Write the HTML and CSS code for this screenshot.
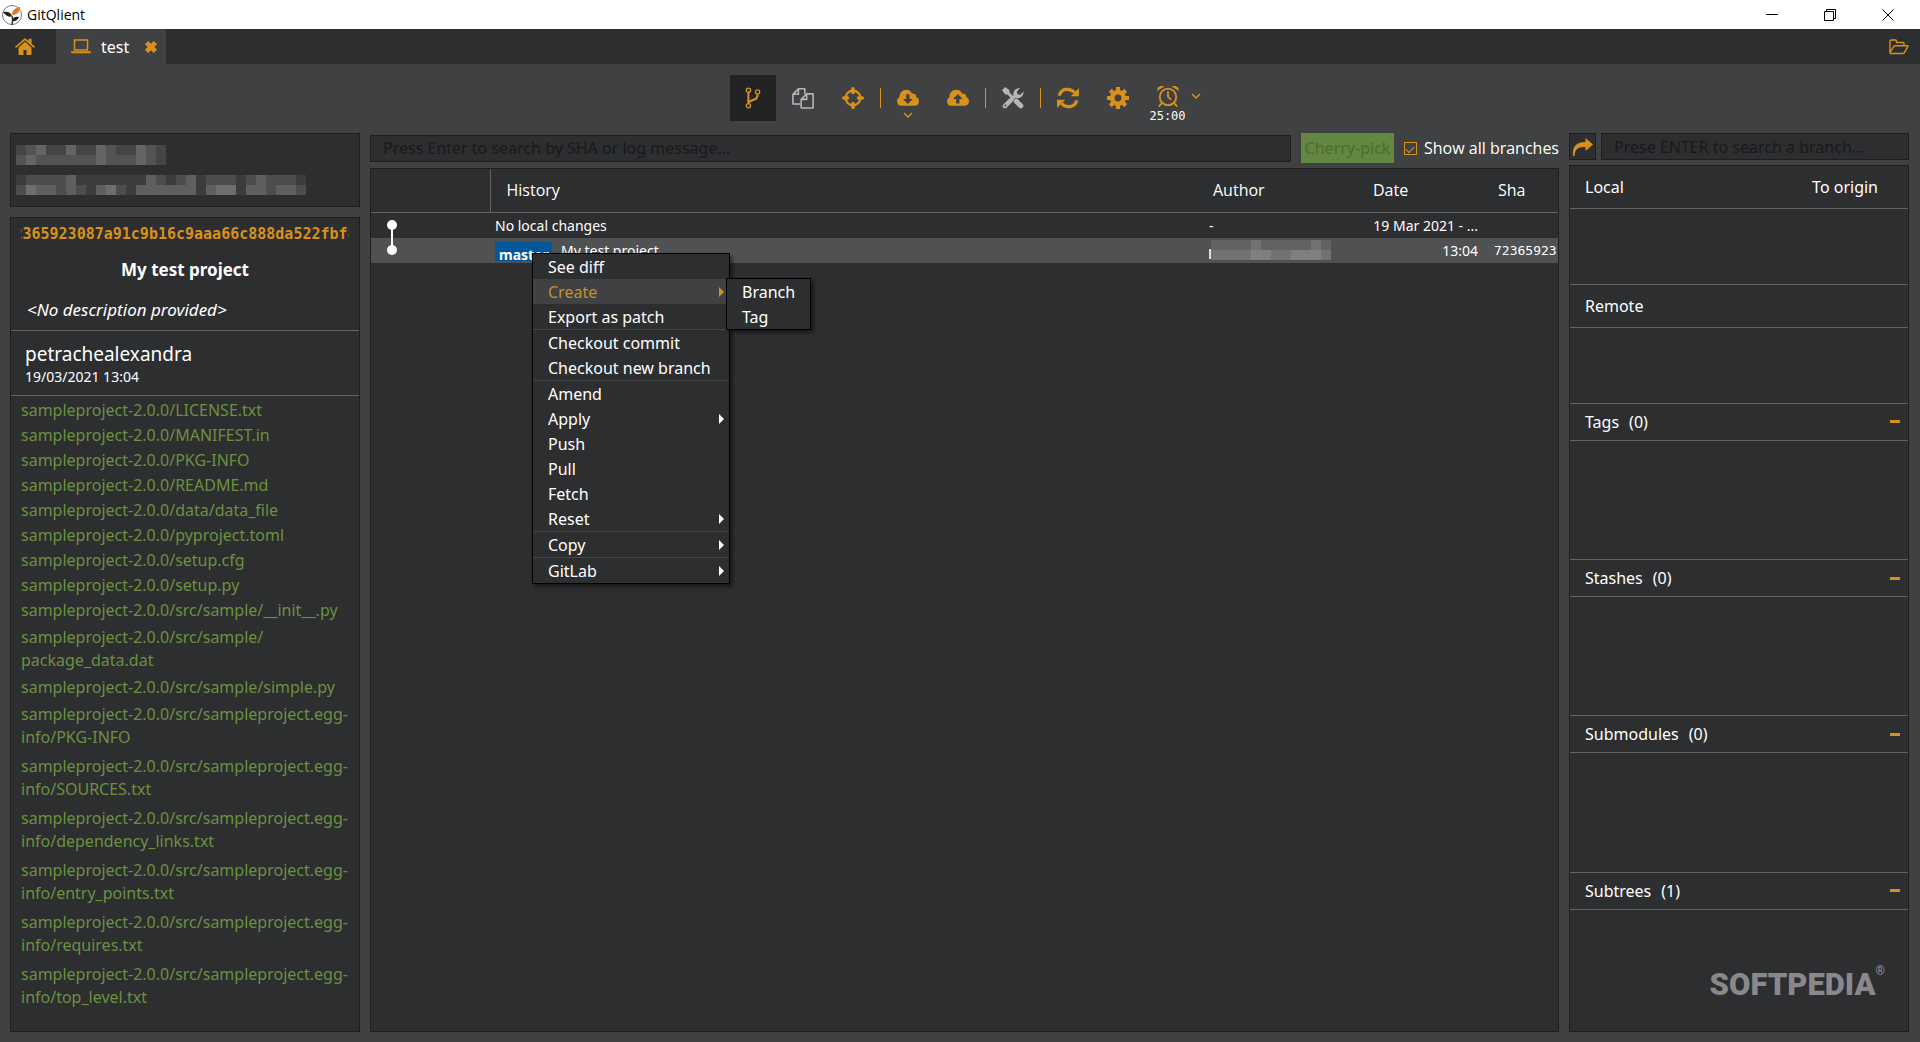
FILE: index.html
```html
<!DOCTYPE html>
<html lang="en">
<head>
<meta charset="utf-8">
<title>GitQlient</title>
<link rel="stylesheet" href="styles.css">
</head>
<body>
<header class="titlebar">
  <svg class="app-logo" viewBox="0 0 22 22"><circle cx="11" cy="11" r="9.500" fill="#fff" stroke="#777" /><path d="M11 21c1-4 1-6 0-9" fill="none" stroke="#222" stroke-width="1.300"/><path d="M11 12C9 14 5 12 2 8c4-1 8 0 9 4z" fill="#222"/><path d="M11 17c0-3 3-5 7-4-1 3-4 5-7 4z" fill="#222"/><path d="M11 11c0-5 3-7 8-8 0 5-3 8-8 8z" fill="#e0782a"/></svg>
  <h1 class="app-name">GitQlient</h1>
  <div class="window-buttons">
    <button aria-label="Minimize"><svg viewBox="0 0 12 12"><path d="M0 5.500h12"/></svg></button>
    <button aria-label="Restore"><svg viewBox="0 0 12 12"><path d="M.5 2.500h9v9h-9zM2.500 2V.5h9v9H10"/></svg></button>
    <button aria-label="Close"><svg viewBox="0 0 12 12"><path d="M.5.5l11 11M11.500.5l-11 11"/></svg></button>
  </div>
</header>

<nav class="tabs">
  <button class="tab home" aria-label="Home"><svg viewBox="0 0 20 18" class="icon-tab"><path fill="currentColor" d="M10 3.800l6.500 5.700V16q0 1-1 1h-4v-5h-3v5h-4q-1 0-1-1V9.500zM10 0l3.600 3.100V.8h3v5L20 8.700l-1 1.200L10 2.200 1 9.900 0 8.700z"/></svg></button>
  <div class="tab current">
    <svg viewBox="0 0 20 15" class="icon-tab laptop"><path fill="none" stroke="currentColor" stroke-width="1.500" d="M3.500.9h13v10h-13z"/><path fill="currentColor" d="M0 12.200h20v.8q0 1.200-1.500 1.200h-17Q0 14.200 0 13z"/></svg>
    <span>test</span>
    <button class="close-tab" aria-label="Close tab"><svg viewBox="0 0 12 12"><path d="M2.200 2.200l7.600 7.600M9.800 2.200L2.200 9.800" stroke="currentColor" stroke-width="4"/></svg></button>
  </div>
  <button class="open-repo" aria-label="Open repository"><svg viewBox="0 0 20 16"><path fill="none" stroke="currentColor" stroke-width="1.400" stroke-linejoin="round" d="M1 13.500V2q0-1 1-1h4.500q1 0 1 1v1.500H14q1 0 1 1v2.200M1 13.500l3.600-5.800q.6-1 1.600-1h12q1.200 0 .6 1l-3 5.200q-.7 1.600-2 1.600H2q-1 0-1-1z"/></svg></button>
</nav>

<div class="toolbar">
  <button class="tool active" aria-label="View graph"><svg viewBox="0 0 24 24"><g fill="none" stroke="currentColor" stroke-width="1.500"><circle cx="7" cy="3.500" r="2.300"/><circle cx="7" cy="20.500" r="2.300"/><circle cx="17" cy="5.500" r="2.300"/></g><path fill="none" stroke="currentColor" stroke-width="2.200" d="M7 6v12M17 8c0 6-3 5-7 7q-3 1-3 3"/></svg></button>
  <button class="tool gray" aria-label="Diff"><svg viewBox="0 0 24 24"><g fill="none" stroke="currentColor" stroke-width="1.700" stroke-linejoin="round"><path d="M9.500 18.500H1V8l6-6h7v5.500M7 2v6H1"/><path d="M16 7.500h7V23H10V13.500zM16 7.500v6h-6"/></g></svg></button>
  <button class="tool" aria-label="Blame"><svg viewBox="0 0 24 24"><circle cx="12" cy="12" r="8" fill="none" stroke="currentColor" stroke-width="2.400"/><path stroke="currentColor" stroke-width="4" stroke-linecap="round" d="M12 2v4M12 18v4M2 12h4M18 12h4"/></svg></button>
  <span class="divider"></span>
  <button class="tool" aria-label="Pull"><svg viewBox="0 0 24 24"><path fill="currentColor" fill-rule="evenodd" d="M5 20.500C2 20.500 0 18.500 0 15.700c0-2 1-3.600 2.700-4.400C2.500 6.500 6 3 10 3c3 0 5.500 1.700 6.500 4.300 2.400-.8 4.700 1 4.400 3.700C23 11.700 24 13.500 24 15.500c0 3-2 5-5 5zM10 8v5H6.500l5.300 5.500 5.300-5.500H13.600V8z"/></svg><svg class="caret" viewBox="0 0 10 6"><path d="M1 1l4 4 4-4"/></svg></button>
  <button class="tool" aria-label="Push"><svg viewBox="0 0 24 24"><path fill="currentColor" fill-rule="evenodd" d="M5 20.500C2 20.500 0 18.500 0 15.700c0-2 1-3.600 2.700-4.400C2.500 6.500 6 3 10 3c3 0 5.500 1.700 6.500 4.300 2.400-.8 4.700 1 4.400 3.700C23 11.700 24 13.500 24 15.500c0 3-2 5-5 5zM10 18v-5H6.500l5.300-5.500 5.300 5.500H13.600v5z"/></svg></button>
  <span class="divider"></span>
  <button class="tool gray" aria-label="Configuration tools"><svg viewBox="0 0 24 24"><path stroke="currentColor" stroke-width="5" stroke-linecap="round" d="M3.200 20.800l6.500-6.500"/><path stroke="currentColor" stroke-width="3.500" d="M9 15l7-7"/><path fill="currentColor" d="M12.500 9.500c-1-4 1.800-8.700 7.300-8.200l-3.500 3.500.6 3 3 .6 3.500-3.500c.6 5-3.900 8.500-8 7.200z"/><path fill="currentColor" d="M0 3.500L3.500 0l4.700 3.500V6l4.500 4.500-2.200 2.200L6 8.200H3.500z"/><path stroke="currentColor" stroke-width="5.600" stroke-linecap="round" d="M15.500 15.500l5 5"/><circle cx="3.800" cy="20.200" r="1" fill="#404142"/></svg></button>
  <span class="divider"></span>
  <button class="tool" aria-label="Refresh"><svg viewBox="0 0 24 24"><path fill="none" stroke="currentColor" stroke-width="3.600" d="M2.500 9.500C4.500 1.500 14 .5 19 6M21.500 14.500c-2 8-11.500 9-16.500 3.500"/><path fill="currentColor" d="M24 1v9h-9zM0 23v-9h9z"/></svg></button>
  <button class="tool" aria-label="Settings"><svg viewBox="0 0 24 24"><circle cx="12" cy="12" r="6.200" fill="none" stroke="currentColor" stroke-width="5"/><path stroke="currentColor" stroke-width="4.600" d="M12 0v5M12 19v5M0 12h5M19 12h5M3.600 3.600l3.400 3.400M17 17l3.400 3.400M20.400 3.600L17 7M7 17l-3.400 3.400"/></svg></button>
  <button class="tool timer"><svg viewBox="0 0 24 24"><circle cx="12" cy="13" r="9" fill="none" stroke="currentColor" stroke-width="2"/><path fill="none" stroke="currentColor" stroke-width="2" d="M12 7v6l3.500 3M5 20l-3 3.500M19 20l3 3.500"/><path fill="currentColor" d="M0 6.500C0 2 4 0 8 1.500zM24 6.500C24 2 20 0 16 1.500z"/></svg><span>25:00</span><svg class="caret side" viewBox="0 0 10 6"><path d="M1 1l4 4 4-4"/></svg></button>
</div>

<main class="workspace">
  <aside class="left">
    <section class="panel user-info">
      <svg class="mosaic" width="150" height="20" viewBox="0 0 150 20"><path fill="#515354" d="M0 0h140v10h10v10H0z"/><path fill="#434546" d="M0 0h10v10H0zM30 0h20v10H30zM60 0h20v10H60zM100 0h20v10h-20zM140 0h10v20h-10z"/><path fill="#626466" d="M20 0h10v10H20zM50 0h10v10H50zM120 0h10v20h-10zM10 10h10v10H10zM80 0h10v20H80z"/></svg>
      <svg class="mosaic" width="290" height="20" viewBox="0 0 290 20"><path fill="#4b4d4e" d="M0 0h290v20H0z"/><path fill="#3a3c3d" d="M0 0h10v10H0zM60 0h70v10H60zM70 10h10v10H70zM150 0h10v10h-10zM180 0h10v20h-10zM220 0h10v20h-10zM280 0h10v10h-10zM110 10h10v10h-10z"/><path fill="#5d5f60" d="M10 10h30v10H10zM50 0h10v20H50zM80 10h10v10H80zM120 10h60v10h-60zM130 0h10v10h-10zM170 0h10v10h-10zM190 10h30v10h-30zM230 10h20v10h-20zM240 0h10v10h-10zM260 10h20v10h-20z"/><path fill="#6c6e6f" d="M10 10h10v10H10zM90 10h10v10H90zM200 10h20v10h-20z"/></svg>
    </section>
    <section class="panel commit">
      <div class="commit-sha">72365923087a91c9b16c9aaa66c888da522fbf8a</div>
      <h2 class="commit-title">My test project</h2>
      <p class="commit-desc">&lt;No description provided&gt;</p>
      <div class="commit-author"><strong>petrachealexandra</strong><time>19/03/2021 13:04</time></div>
      <ul class="files">
        <li>sampleproject-2.0.0/LICENSE.txt</li>
        <li>sampleproject-2.0.0/MANIFEST.in</li>
        <li>sampleproject-2.0.0/PKG-INFO</li>
        <li>sampleproject-2.0.0/README.md</li>
        <li>sampleproject-2.0.0/data/data_file</li>
        <li>sampleproject-2.0.0/pyproject.toml</li>
        <li>sampleproject-2.0.0/setup.cfg</li>
        <li>sampleproject-2.0.0/setup.py</li>
        <li>sampleproject-2.0.0/src/sample/__init__.py</li>
        <li class="wrapped">sampleproject-2.0.0/src/sample/<br>package_data.dat</li>
        <li>sampleproject-2.0.0/src/sample/simple.py</li>
        <li class="wrapped">sampleproject-2.0.0/src/sampleproject.egg-<br>info/PKG-INFO</li>
        <li class="wrapped">sampleproject-2.0.0/src/sampleproject.egg-<br>info/SOURCES.txt</li>
        <li class="wrapped">sampleproject-2.0.0/src/sampleproject.egg-<br>info/dependency_links.txt</li>
        <li class="wrapped">sampleproject-2.0.0/src/sampleproject.egg-<br>info/entry_points.txt</li>
        <li class="wrapped">sampleproject-2.0.0/src/sampleproject.egg-<br>info/requires.txt</li>
        <li class="wrapped">sampleproject-2.0.0/src/sampleproject.egg-<br>info/top_level.txt</li>
      </ul>
    </section>
  </aside>

  <section class="center">
    <div class="search-row">
      <input class="field" type="text" aria-label="Search log" placeholder="Press Enter to search by SHA or log message...">
      <button class="cherry" disabled>Cherry-pick</button>
      <label class="show-all"><input type="checkbox" checked>Show all branches</label>
    </div>
    <div class="panel history">
      <table>
        <colgroup><col class="c-graph"><col><col class="c-author"><col class="c-date"><col class="c-sha"></colgroup>
        <thead><tr><th></th><th class="ruled">History</th><th>Author</th><th>Date</th><th>Sha</th></tr></thead>
        <tbody>
          <tr><td class="graph"><svg viewBox="0 0 20 25"><path d="M10 12v13" stroke="#fff" stroke-width="2"/><circle cx="10" cy="12" r="5" fill="#fff"/></svg></td><td class="msg">No local changes</td><td>-</td><td class="date">19 Mar 2021 - ...</td><td></td></tr>
          <tr class="selected"><td class="graph"><svg viewBox="0 0 20 25"><path d="M10 0v12" stroke="#fff" stroke-width="2"/><circle cx="10" cy="12" r="5" fill="#fff"/></svg></td><td class="msg"><span class="branch">master</span>My test project</td><td><svg class="author-mosaic" width="122" height="20" viewBox="0 0 122 20"><path fill="#ddd" d="M0 9h2v10H0z"/><path fill="#626365" d="M2 0h120v20H2z"/><path fill="#727375" d="M2 10h120v10H2zM42 0h10v20H42zM102 0h10v10h-10z"/><path fill="#7e7f80" d="M42 10h20v10H42zM82 10h30v10H82z"/></svg></td><td class="date">13:04</td><td class="sha">72365923</td></tr>
        </tbody>
      </table>
      <div class="menu context" role="menu">
        <button>See diff</button>
        <button class="hover sub">Create</button>
        <button>Export as patch</button>
        <hr>
        <button>Checkout commit</button>
        <button>Checkout new branch</button>
        <hr>
        <button>Amend</button>
        <button class="sub">Apply</button>
        <button>Push</button>
        <button>Pull</button>
        <button>Fetch</button>
        <button class="sub">Reset</button>
        <hr>
        <button class="sub">Copy</button>
        <hr>
        <button class="sub">GitLab</button>
        <div class="menu submenu" role="menu"><button>Branch</button><button>Tag</button></div>
      </div>
    </div>
  </section>

  <aside class="right">
    <div class="branch-search">
      <button class="go" aria-label="Go to branch"><svg viewBox="0 0 22 20"><path fill="currentColor" d="M1 19C0 9 5 5 13.500 5V1L21 7.500 13.500 14v-4C7 10 3 11 2.500 19z"/></svg></button>
      <input class="field" type="text" aria-label="Search branch" placeholder="Prese ENTER to search a branch...">
    </div>
    <div class="panel refs">
      <h3 class="tall"><span>Local</span><span class="origin">To origin</span></h3><div class="list short"></div>
      <h3 class="tall"><span>Remote</span></h3><div class="list short"></div>
      <h3><span>Tags</span><span>(0)</span><button aria-label="Collapse tags"></button></h3><div class="list"></div>
      <h3><span>Stashes</span><span>(0)</span><button aria-label="Collapse stashes"></button></h3><div class="list"></div>
      <h3><span>Submodules</span><span>(0)</span><button aria-label="Collapse submodules"></button></h3><div class="list"></div>
      <h3><span>Subtrees</span><span>(1)</span><button aria-label="Collapse subtrees"></button></h3><div class="list last"></div>
      <div class="watermark">SOFTPEDIA<sup>®</sup></div>
    </div>
  </aside>
</main>
</body>
</html>
```

FILE: styles.css
```css
:root {
  --bg: #404142;
  --panel: #2d2e30;
  --edge: #1d1e1f;
  --line: #606263;
  --orange: #d8911a;
  --ui: "Open Sans", "Noto Sans", sans-serif;
  --field: "Noto Sans", "Open Sans", sans-serif;
  --mono: "DejaVu Sans Mono", monospace;
}

* { box-sizing: border-box; }

body {
  margin: 0;
  height: 100vh;
  display: flex;
  flex-direction: column;
  overflow: hidden;
  background: var(--bg);
  color: #fff;
  font: 16px/24px var(--ui);
}

button {
  padding: 0;
  border: 0;
  background: none;
  color: inherit;
  font: inherit;
}

h1, h2, h3, p, ul { margin: 0; padding: 0; }
svg { display: block; }

/* window title bar */
.titlebar {
  flex: none;
  display: flex;
  align-items: center;
  height: 29px;
  padding: 0 3px 0 1px;
  background: #fff;
  color: #000;
}
.app-logo { width: 22px; height: 22px; }
.app-name { margin-left: 4px; font-size: 14px; font-weight: 400; }
.window-buttons { display: flex; margin-left: auto; }
.window-buttons button {
  width: 58px;
  height: 29px;
  display: grid;
  place-items: center;
}
.window-buttons svg { width: 12px; height: 12px; fill: none; stroke: #000; }

/* repository tabs */
.tabs { flex: none; display: flex; height: 35px; background: var(--panel); }
.tab { display: flex; align-items: center; }
.home { width: 56px; padding-left: 15px; color: var(--orange); }
.icon-tab { width: 20px; height: 18px; }
.laptop { height: 15px; color: var(--orange); }
.current { gap: 10px; width: 110px; padding: 0 8px 0 15px; background: var(--bg); font-family: var(--field); }
.close-tab { margin-left: auto; color: var(--orange); }
.close-tab svg { width: 14px; height: 14px; }
.open-repo { margin-left: auto; padding: 0 11px; color: var(--orange); }
.open-repo svg { width: 20px; height: 16px; }

/* main toolbar */
.toolbar {
  flex: none;
  display: flex;
  justify-content: center;
  align-items: center;
  gap: 4px;
  height: 69px;
  padding-bottom: 1px;
}
.tool {
  position: relative;
  display: grid;
  place-items: center;
  width: 46px;
  height: 46px;
  color: var(--orange);
}
.tool svg { width: 22px; height: 22px; fill: none; }
.tool.active { background: #222324; }
.gray { color: #b4b6b8; }
.divider { width: 1px; height: 20px; background: var(--orange); }
.tool .caret {
  position: absolute;
  top: 37px;
  left: 18px;
  width: 10px;
  height: 6px;
  stroke: currentColor;
  stroke-width: 1.5;
}
.tool .side { top: 18px; left: 46px; }
.timer { align-content: start; padding-top: 10px; }
.timer span { color: #fff; font: 12px/18px var(--mono); }

.workspace {
  flex: 1;
  min-height: 0;
  display: grid;
  grid-template-columns: 350px 1fr 340px;
  gap: 10px;
  padding: 0 11px 10px 10px;
}
.left, .center, .right { display: flex; flex-direction: column; min-width: 0; min-height: 0; }
.panel { background: var(--panel); border: 1px solid var(--edge); }

/* commit details */
.left { gap: 10px; }
.user-info { display: flex; flex-direction: column; gap: 10px; padding: 11px 5px; }
.commit { flex: 1; }
.commit-sha {
  display: flex;
  justify-content: center;
  margin: 0 10px;
  overflow: hidden;
  color: var(--orange);
  font: bold 15px/32px var(--mono);
}
.commit-title { font: bold 17px/24px var(--field); text-align: center; padding: 8px 0; }
.commit-desc {
  padding: 8px 16px;
  border-bottom: 1px solid var(--line);
  font: italic 17px/24px var(--field);
}
.commit-author {
  display: flex;
  flex-direction: column;
  padding: 11px 14px 8px;
  border-bottom: 1px solid var(--line);
}
.commit-author strong { font: 19px/24px var(--field); }
.commit-author time { font: 14px/21px var(--field); }
.files {
  padding: 2px 10px;
  list-style: none;
  color: #6c9040;
  font: 16px/23px var(--field);
  white-space: nowrap;
}
.files li { padding: 1px 0; }
.files .wrapped { padding: 3px 0; }

/* log search */
.field {
  height: 27px;
  padding: 0 12px;
  border: 1px solid var(--edge);
  background: var(--panel);
  color: #fff;
  font: 16px/24px var(--field);
}
.field::placeholder { color: #191a1b; opacity: 1; }
.search-row { display: flex; align-items: center; height: 30px; margin-bottom: 5px; }
.search-row .field { flex: 1; min-width: 0; }
.cherry {
  width: 93px;
  height: 30px;
  margin: 0 10px;
  background: #638741;
  color: #4d6c35;
  font-family: var(--field);
}
.show-all { display: flex; align-items: center; gap: 7px; white-space: nowrap; }
.show-all input {
  appearance: none;
  display: grid;
  place-items: center;
  width: 13px;
  height: 13px;
  margin: 0;
  border: 1px solid var(--orange);
}
.show-all input:checked::before {
  content: "";
  width: 7px;
  height: 4px;
  border: solid #c9a050;
  border-width: 0 0 1px 1px;
  transform: rotate(-45deg);
}

/* commit history */
.history { position: relative; flex: 1; }
table { width: 100%; table-layout: fixed; border-collapse: collapse; }
.c-graph { width: 119px; }
.c-author { width: 160px; }
.c-date { width: 125px; }
.c-sha { width: 76px; }
th {
  height: 43px;
  padding: 0 16px;
  border-bottom: 1px solid var(--line);
  font-weight: 400;
  text-align: left;
}
.ruled { border-left: 1px solid var(--line); }
td {
  height: 25px;
  padding: 0 0 0 12px;
  font: 14px/25px var(--field);
  white-space: nowrap;
}
.graph svg { width: 20px; height: 25px; }
.graph { padding-left: 11px; }
.msg { padding-left: 5px; }
td.date { padding: 0 4px 0 0; text-align: right; }
.sha { font: 13px/25px var(--mono); }
.selected { background: #505153; }
.branch {
  display: inline-block;
  width: 57px;
  height: 19px;
  margin-right: 9px;
  padding-left: 4px;
  overflow: hidden;
  background: #04589a;
  font-weight: 700;
  vertical-align: middle;
}

/* menus */
.menu {
  position: absolute;
  display: flex;
  flex-direction: column;
  border: 1px solid #000;
  background: var(--panel);
  box-shadow: 3px 3px 3px rgba(0, 0, 0, .4);
  font-family: var(--field);
}
.context { left: 161px; top: 84px; width: 198px; }
.submenu { left: 193px; top: 24px; width: 85px; }
.menu button { display: flex; align-items: center; height: 25px; padding: 0 5px 0 15px; }
.menu hr { width: 100%; height: 1px; margin: 0; border: 0; background: #434546; }
.menu .hover { background: var(--bg); color: #c4922c; }
.sub::after {
  content: "";
  margin-left: auto;
  border: 5px solid transparent;
  border-left-color: currentColor;
  border-right: 0;
}

/* branches */
.branch-search { display: flex; gap: 5px; margin-bottom: 5px; }
.branch-search .field { flex: 1; min-width: 0; }
.go {
  display: grid;
  place-items: center;
  width: 27px;
  height: 27px;
  border: 1px solid var(--edge);
  background: var(--panel);
  color: var(--orange);
}
.go svg { width: 22px; height: 20px; }
.refs { position: relative; flex: 1; display: flex; flex-direction: column; }
.refs h3 {
  flex: none;
  display: flex;
  align-items: center;
  gap: 10px;
  height: 36px;
  padding: 0 8px 0 15px;
  font: 16px/24px var(--field);
}
.refs .tall { height: 42px; }
.refs .origin { margin-left: auto; padding-right: 22px; }
.refs h3 button { width: 10px; height: 3px; margin-left: auto; background: var(--orange); }
.list { flex: 120; border: solid var(--line); border-width: 1px 0; }
.short { flex: 76; }
.last { flex: 123; border-bottom: 0; }
.watermark {
  position: absolute;
  right: 23px;
  bottom: 26px;
  color: #89898b;
  font: 900 31px/40px Roboto, sans-serif;
}
.watermark sup { font-size: 12px; line-height: 12px; vertical-align: top; }
```
